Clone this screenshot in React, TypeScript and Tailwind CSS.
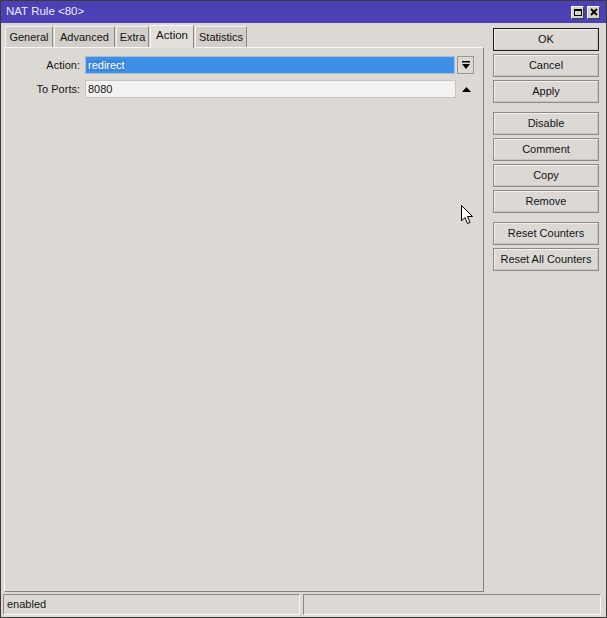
import React from 'react'

const TABS = [
  { label: 'General', w: 'w-[48px]' },
  { label: 'Advanced', w: 'w-[61px]' },
  { label: 'Extra', w: 'w-[33px]' },
  { label: 'Action', w: 'w-[44px]', active: true },
  { label: 'Statistics', w: 'w-[52px]' },
]

function Btn({ children, primary = false, className = '' }: { children: React.ReactNode; primary?: boolean; className?: string }) {
  return (
    <div
      className={`h-[23px] w-[106px] flex items-center justify-center bg-[#dcd9d5] ${
        primary ? 'border border-[#1c1c1c]' : 'border border-[#8d8984]'
      } ${className}`}
    >
      <div className="w-full h-full flex items-center justify-center border border-[#f3f1ee] border-r-[#c9c5c0] border-b-[#c9c5c0]">
        {children}
      </div>
    </div>
  )
}

export default function App() {
  return (
    <div
      className="relative w-[607px] h-[618px] bg-[#dcd9d5] border border-[#3a3a3a] flex flex-col text-[11px] text-[#141414] leading-none select-none"
      style={{ fontFamily: '"Liberation Sans", Arial, sans-serif' }}
    >
      {/* Title bar */}
      <div className="h-[22px] bg-[#4b41b5] flex items-center pl-[5px] pr-[6px] text-[#ecebff] text-[11.5px]">
        <span>NAT Rule &lt;80&gt;</span>
        <div className="ml-auto flex gap-[3px]">
          <div className="w-[13px] h-[13px] bg-[#d6d3ce] border border-[#f5f5f5] border-r-[#404040] border-b-[#404040] flex items-center justify-center">
            <div className="w-[8px] h-[7px] border border-black border-t-2" />
          </div>
          <div className="w-[13px] h-[13px] bg-[#d6d3ce] border border-[#f5f5f5] border-r-[#404040] border-b-[#404040] flex items-center justify-center">
            <svg width="8" height="8" viewBox="0 0 8 8">
              <path d="M1 1 L7 7 M7 1 L1 7" stroke="#000" strokeWidth="1.8" />
            </svg>
          </div>
        </div>
      </div>

      {/* Body */}
      <div className="flex flex-1 min-h-0">
        <div className="w-[483px] pl-[3px] pt-[1px] flex flex-col">
          {/* Tabs */}
          <div className="h-[23px] flex items-end pl-[1px] gap-[1px]">
            {TABS.map(t =>
              t.active ? (
                <div
                  key={t.label}
                  className={`${t.w} h-[23px] -mb-[1px] relative z-10 bg-[#e2dfdb] border border-[#f7f6f4] border-r-[#8d8984] border-b-0 flex items-center justify-center pb-[2px] text-[11.5px]`}
                >
                  {t.label}
                </div>
              ) : (
                <div
                  key={t.label}
                  className={`${t.w} h-[21px] bg-[#d2cec9] border border-[#f3f1ee] border-r-[#8d8984] border-b-0 flex items-center justify-center`}
                >
                  {t.label}
                </div>
              )
            )}
          </div>

          {/* Panel */}
          <div className="w-[480px] flex-1 mb-[1px] border border-[#f7f6f4] border-r-[#85817c] border-b-[#85817c] pt-[8px] flex flex-col gap-[6px]">
            <div className="flex items-center h-[18px]">
              <div className="w-[75px] text-right">Action:</div>
              <div className="ml-[5px] w-[370px] h-[18px] bg-[#3d8fe8] border border-[#a9bed3] flex items-center pl-[1px]">
                <span className="bg-[#3a86dc] text-white px-[1px]">redirect</span>
              </div>
              <div className="ml-[2px] w-[17px] h-[18px] border border-[#9a9690] bg-[#dcd9d5] flex items-center justify-center">
                <svg width="8" height="8" viewBox="0 0 8 8">
                  <rect x="0" y="0" width="8" height="1.5" fill="#000" />
                  <path d="M0 3 L8 3 L4 8 Z" fill="#000" />
                </svg>
              </div>
            </div>
            <div className="flex items-center h-[18px]">
              <div className="w-[75px] text-right">To Ports:</div>
              <div className="ml-[5px] w-[371px] h-[18px] bg-[#f3f2f0] border border-[#c8c4bf] flex items-center pl-[2px]">
                8080
              </div>
              <div className="ml-[5px] w-[10px] flex justify-center">
                <svg width="9" height="5" viewBox="0 0 9 5">
                  <path d="M0 5 L4.5 0 L9 5 Z" fill="#000" />
                </svg>
              </div>
            </div>
          </div>
        </div>

        {/* Buttons */}
        <div className="pl-[9px] pt-[5px] flex flex-col">
          <div className="flex flex-col gap-[3px]">
            <Btn primary>OK</Btn>
            <Btn>Cancel</Btn>
            <Btn>Apply</Btn>
          </div>
          <div className="flex flex-col gap-[3px] mt-[9px]">
            <Btn>Disable</Btn>
            <Btn>Comment</Btn>
            <Btn>Copy</Btn>
            <Btn>Remove</Btn>
          </div>
          <div className="flex flex-col gap-[3px] mt-[9px]">
            <Btn>Reset Counters</Btn>
            <Btn>Reset All Counters</Btn>
          </div>
        </div>
      </div>

      {/* Status bar */}
      <div className="h-[24px] pt-[1px] pl-[2px] pr-[5px] flex gap-[3px]">
        <div className="w-[297px] h-[21px] border border-[#8d8984] border-r-[#f7f6f4] border-b-[#f7f6f4] flex items-center pl-[3px]">
          enabled
        </div>
        <div className="flex-1 h-[21px] border border-[#8d8984] border-r-[#f7f6f4] border-b-[#f7f6f4]" />
      </div>

      {/* Mouse cursor */}
      <svg className="absolute left-[460px] top-[204px]" width="13" height="20" viewBox="0 0 13 20">
        <path d="M0.5 0.5 L0.5 16 L4 12.5 L6.5 18.5 L9 17.5 L6.5 11.5 L11.5 11.5 Z" fill="#fff" stroke="#000" strokeWidth="1" />
      </svg>
    </div>
  )
}
